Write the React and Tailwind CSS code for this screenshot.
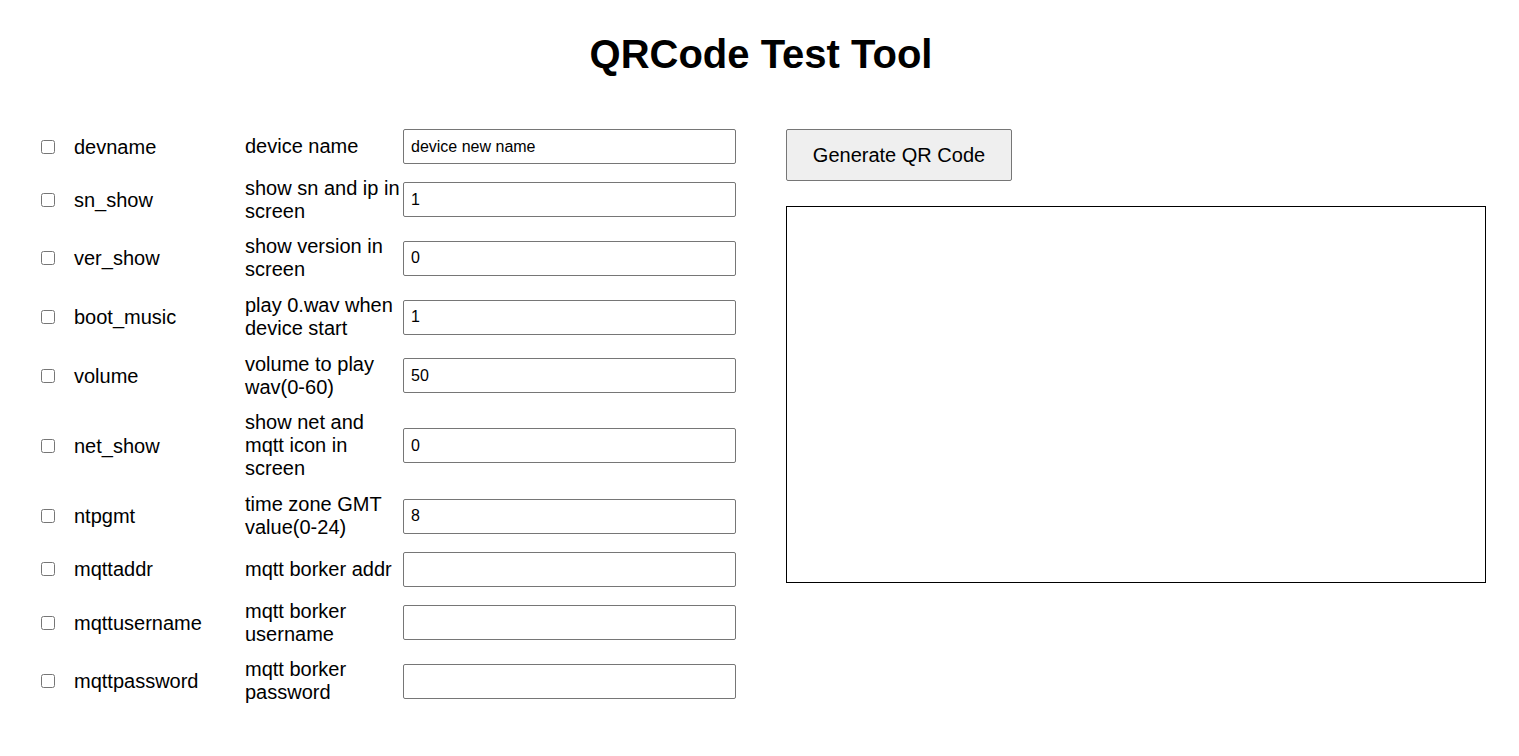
import { useState } from 'react'

const fields = [
  { key: 'devname', desc: 'device name', value: 'device new name' },
  { key: 'sn_show', desc: 'show sn and ip in screen', value: '1' },
  { key: 'ver_show', desc: 'show version in screen', value: '0' },
  { key: 'boot_music', desc: 'play 0.wav when device start', value: '1' },
  { key: 'volume', desc: 'volume to play wav(0-60)', value: '50' },
  { key: 'net_show', desc: 'show net and mqtt icon in screen', value: '0' },
  { key: 'ntpgmt', desc: 'time zone GMT value(0-24)', value: '8' },
  { key: 'mqttaddr', desc: 'mqtt borker addr', value: '' },
  { key: 'mqttusername', desc: 'mqtt borker username', value: '' },
  { key: 'mqttpassword', desc: 'mqtt borker password', value: '' },
]

function FieldRow({ field, checked, onCheck, value, onChange }) {
  return (
    <>
      <div className="flex items-center">
        <input
          type="checkbox"
          checked={checked}
          onChange={onCheck}
          className="m-0 h-[14px] w-[14px]"
        />
      </div>
      <div className="flex items-center">{field.key}</div>
      <div className="flex items-center leading-[23px]">{field.desc}</div>
      <div className="flex items-center">
        <input
          type="text"
          value={value}
          onChange={onChange}
          className="h-[35px] w-[333px] rounded-[2px] border border-[#767676] bg-white px-[7px] text-[16px] text-black outline-none"
        />
      </div>
    </>
  )
}

export default function App() {
  const [checks, setChecks] = useState({})
  const [values, setValues] = useState(
    Object.fromEntries(fields.map((f) => [f.key, f.value]))
  )

  return (
    <div className="min-h-screen bg-white font-['Liberation_Sans',Arial,sans-serif] text-[20px] text-black">
      <h1 className="pl-[3px] pt-[32px] text-center text-[40px] font-bold leading-[45px]">QRCode Test Tool</h1>

      <div className="mt-[52px] flex items-start pl-[41px]">
        <div className="grid grid-cols-[33px_171px_158px_333px] gap-y-[12.7px]">
          {fields.map((f) => (
            <FieldRow
              key={f.key}
              field={f}
              checked={!!checks[f.key]}
              onCheck={() => setChecks({ ...checks, [f.key]: !checks[f.key] })}
              value={values[f.key]}
              onChange={(e) => setValues({ ...values, [f.key]: e.target.value })}
            />
          ))}
        </div>

        <div className="ml-[50px] flex flex-col items-start">
          <button className="h-[52px] w-[226px] rounded-[2px] border border-[#767676] bg-[#efefef] text-[20px] text-black">
            Generate QR Code
          </button>
          <div className="mt-[25px] h-[377px] w-[700px] border border-black" />
        </div>
      </div>
    </div>
  )
}
